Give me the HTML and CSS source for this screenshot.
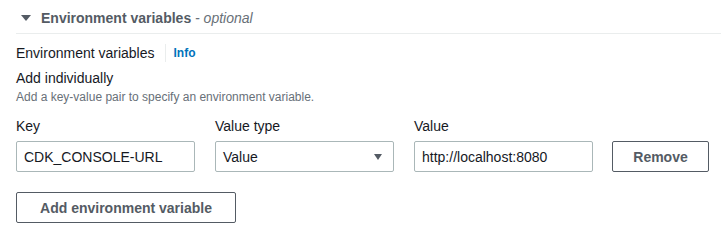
FILE: index.html
```html
<!DOCTYPE html>
<html lang="en">
<head>
<meta charset="utf-8">
<title>Environment variables</title>
<link rel="stylesheet" href="styles.css">
</head>
<body>
<div class="section">
  <div class="section-header">
    <svg class="caret" width="10" height="7" viewBox="0 0 10 7"><polygon points="0,0 10,0 5,6" fill="currentColor"/></svg>
    <span class="section-title">Environment variables</span><span class="optional"> - optional</span>
  </div>
  <div class="content">
    <div class="label-row">
      <span class="form-label">Environment variables</span>
      <span class="divider"></span>
      <a class="info">Info</a>
    </div>
    <div class="sub-label">Add individually</div>
    <div class="description">Add a key-value pair to specify an environment variable.</div>
    <div class="kv-grid">
      <div class="field-label">Key</div>
      <div class="field-label">Value type</div>
      <div class="field-label">Value</div>
      <div></div>
      <div class="input">CDK_CONSOLE-URL</div>
      <div class="input select">Value<svg class="select-caret" width="8" height="6" viewBox="0 0 8 6"><polygon points="0,0 8,0 4,6" fill="#545b64"/></svg></div>
      <div class="input">http://localhost:8080</div>
      <button class="btn">Remove</button>
    </div>
    <button class="btn add-btn">Add environment variable</button>
  </div>
</div>
</body>
</html>
```
FILE: styles.css
```css
* { box-sizing: border-box; }
body {
  margin: 0;
  background: #ffffff;
  font-family: "Liberation Sans", Arial, sans-serif;
  font-size: 14px;
  line-height: 20px;
  color: #16191f;
}
.section-header {
  margin-left: 16px;
  padding: 8px 0 5px 5px;
  border-bottom: 1px solid #eaeded;
  display: flex;
  align-items: center;
  color: #545b64;
  height: 34px;
}
.caret { margin-right: 10px; color: #545b64; }
.section-title { font-weight: bold; color: #545b64; }
.optional { font-style: italic; color: #687078; white-space: pre; }
.content { padding-left: 16px; }
.label-row {
  margin-top: 9px;
  display: flex;
  align-items: center;
  height: 20px;
}
.divider {
  width: 1px;
  height: 18px;
  background: #eaeded;
  margin: 0 8px 0 10px;
}
.info {
  color: #0073bb;
  font-weight: bold;
  font-size: 12px;
}
.sub-label { margin-top: 5px; }
.description {
  margin-top: 1px;
  font-size: 12px;
  line-height: 16px;
  color: #687078;
}
.kv-grid {
  margin-top: 11px;
  display: grid;
  grid-template-columns: 179px 179px 179px 96px;
  column-gap: 20px;
  row-gap: 5px;
}
.kv-grid .btn { margin-left: -1px; }
.input {
  height: 31px;
  border: 1px solid #aab7b8;
  border-radius: 2px;
  padding: 0 7px;
  display: flex;
  align-items: center;
  white-space: nowrap;
}
.select { justify-content: space-between; padding-right: 11px; }
.btn {
  height: 31px;
  border: 1px solid #545b64;
  border-radius: 2px;
  background: #ffffff;
  color: #545b64;
  font-family: "Liberation Sans", Arial, sans-serif;
  font-size: 14px;
  font-weight: bold;
  padding: 0 19px;
  display: flex;
  align-items: center;
  justify-content: center;
}
.add-btn {
  margin-top: 20px;
  width: 220px;
}
```
